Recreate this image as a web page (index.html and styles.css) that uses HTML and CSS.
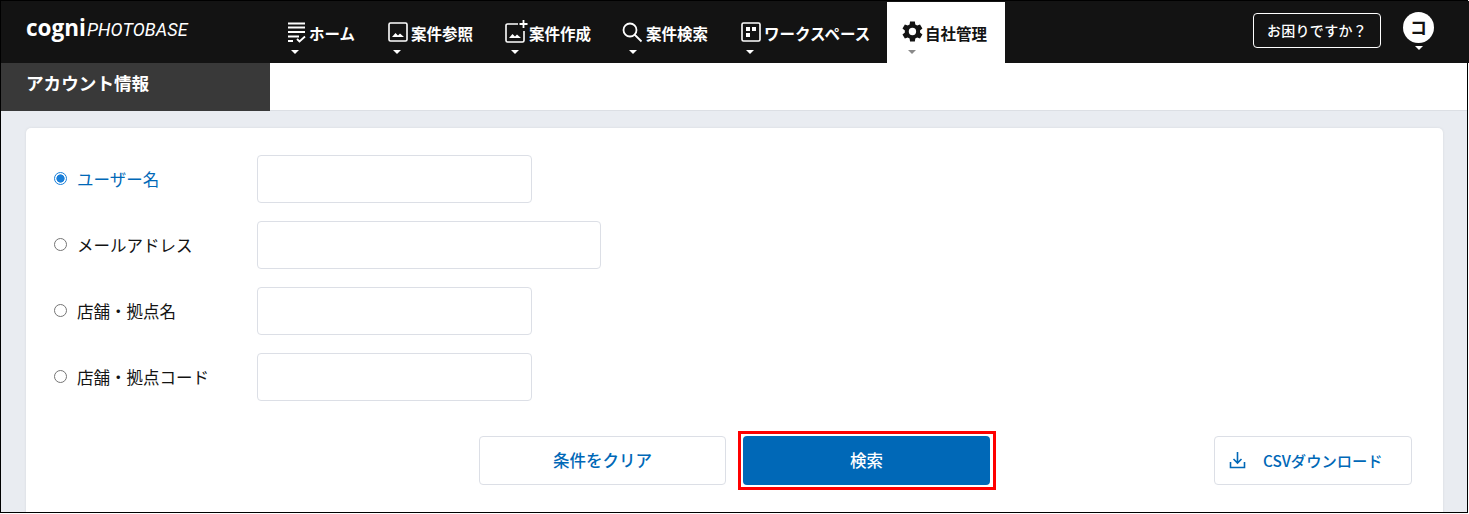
FILE: index.html
```html
<!DOCTYPE html>
<html lang="ja">
<head>
<meta charset="utf-8">
<title>アカウント情報</title>
<link rel="stylesheet" href="styles.css">
</head>
<body>
<div class="frame">
  <header class="header">
    <div class="logo"><span class="logo-cogni">cogni</span><span class="logo-photo">PHOTOBASE</span></div>
    <nav class="nav">
      <a class="nav-item w-home"><span class="nav-icon"><svg width="20" height="22" viewBox="0 0 20 22" fill="none" stroke="#fff" stroke-width="1.8"><path d="M1 2.500h17M1 6.500h17M1 11h17M1 15.500h11M1 20h5M10 18l2.500 2.500L18 15.500"/></svg><i class="caret"></i></span><span>ホーム</span></a>
      <a class="nav-item w-ref"><span class="nav-icon"><svg width="20" height="22" viewBox="0 0 20 22" fill="none"><rect x="1" y="2" width="18" height="18" rx="1.500" stroke="#fff" stroke-width="1.600"/><path d="M4 16l3.500-4 2.500 2.500 2-2 4 3.500z" fill="#fff"/></svg><i class="caret"></i></span><span>案件参照</span></a>
      <a class="nav-item w-new"><span class="nav-icon icon-new"><svg width="23" height="24" viewBox="0 0 23 24" fill="none"><path d="M13 4H2.500A1.500 1.500 0 0 0 1 5.500v15A1.500 1.500 0 0 0 2.500 22h15a1.500 1.500 0 0 0 1.500-1.500V11" stroke="#fff" stroke-width="1.600"/><path d="M4 18l3.500-4 2.500 2.500 2-2 4 3.500z" fill="#fff"/><path d="M18.500 0v8M14.500 4h8" stroke="#fff" stroke-width="1.800"/></svg><i class="caret"></i></span><span>案件作成</span></a>
      <a class="nav-item w-search"><span class="nav-icon"><svg width="21" height="22" viewBox="0 0 21 22" fill="none" stroke="#fff" stroke-width="1.800"><circle cx="8" cy="9" r="6.500"/><path d="M12.500 13.500L19.500 20.500"/></svg><i class="caret"></i></span><span>案件検索</span></a>
      <a class="nav-item w-work"><span class="nav-icon"><svg width="20" height="22" viewBox="0 0 20 22" fill="none"><rect x="1" y="2" width="18" height="18" rx="1.500" stroke="#fff" stroke-width="1.600"/><path d="M5 6h4v4H5zM11 6h4v4h-4zM5 12h4v4H5z" fill="#fff"/></svg><i class="caret"></i></span><span>ワークスペース</span></a>
      <a class="nav-item nav-active"><span class="nav-icon"><svg width="21" height="21" viewBox="2.500 2 19.500 20"><path fill="#131313" d="M19.400 13a7.600 7.600 0 0 0 0-2l2.300-1.800-2.300-3.900-2.700 1.100a7.500 7.500 0 0 0-1.800-1L14.500 2.500h-4.600l-.4 2.900a7.500 7.500 0 0 0-1.800 1L5 5.300 2.700 9.200 5 11a7.600 7.600 0 0 0 0 2l-2.300 1.800L5 18.700l2.700-1.100a7.500 7.500 0 0 0 1.800 1l.4 2.900h4.600l.4-2.900a7.500 7.500 0 0 0 1.800-1l2.700 1.100 2.300-3.900zM12.200 15.500a3.500 3.500 0 1 1 0-7 3.500 3.500 0 0 1 0 7z"/></svg><i class="caret caret-grey"></i></span><span>自社管理</span></a>
    </nav>
    <div class="header-right">
      <a class="help">お困りですか？</a>
      <div class="avatar-wrap"><div class="avatar">コ</div><i class="caret"></i></div>
    </div>
  </header>
  <div class="subbar"><div class="subtitle">アカウント情報</div></div>
  <main class="content">
    <section class="card">
      <div class="rows">
        <label class="row row-on"><span class="radio radio-on"></span><span class="row-label">ユーザー名</span><span class="field"></span></label>
        <label class="row"><span class="radio"></span><span class="row-label">メールアドレス</span><span class="field field-wide"></span></label>
        <label class="row"><span class="radio"></span><span class="row-label">店舗・拠点名</span><span class="field"></span></label>
        <label class="row"><span class="radio"></span><span class="row-label">店舗・拠点コード</span><span class="field"></span></label>
      </div>
      <div class="actions">
        <button class="btn btn-clear">条件をクリア</button>
        <div class="highlight"><button class="btn btn-primary">検索</button></div>
        <button class="btn btn-csv"><svg width="17" height="18" viewBox="0 0 17 18" fill="none" stroke="#0068b7" stroke-width="1.600"><path d="M8.500 1v10.500M4.500 8l4 4 4-4"/><path d="M1.500 11v5.500h14V11"/></svg><span>CSVダウンロード</span></button>
      </div>
    </section>
  </main>
</div>
</body>
</html>
```

FILE: styles.css
```css
* { box-sizing: border-box; }
html, body { margin: 0; padding: 0; }
body {
  width: 1469px;
  height: 514px;
  overflow: hidden;
  background: #fff;
  font-family: "Noto Sans CJK JP", "Noto Sans", sans-serif;
  color: #131313;
}
.frame {
  width: 1468px;
  height: 513px;
  border: 1px solid #000;
  display: flex;
  flex-direction: column;
}
.header {
  height: 62px;
  flex: none;
  margin-right: -2px;
  background: #131313;
  display: flex;
  color: #fff;
}
.logo {
  width: 286px;
  flex: none;
  padding: 12px 0 0 25px;
  display: flex;
  align-items: baseline;
  height: 40px;
  line-height: 30px;
}
.logo-cogni {
  font-family: "Open Sans", sans-serif;
  font-size: 22.500px;
  font-weight: 700;
  letter-spacing: 0;
}
.logo-photo {
  font-family: "Roboto", sans-serif;
  font-style: italic;
  font-size: 18px;
  margin-left: 1px;
  letter-spacing: 0.1px;
}
.nav { display: flex; flex: none; }
.nav-item {
  display: flex;
  padding-top: 20px;
  gap: 3px;
  font-size: 15.500px;
  font-weight: 700;
  line-height: 24px;
  color: #fff;
}
.w-home { width: 101px; gap: 2px; }
.w-ref { width: 117px; }
.w-new { width: 117px; gap: 1px; }
.w-search { width: 119px; }
.w-work { width: 146px; }
.nav-active {
  width: 118px;
  background: #fff;
  color: #131313;
  padding-left: 15px;
  margin-top: 1px;
  padding-top: 19px;
  gap: 2px;
}
.nav-icon {
  position: relative;
  display: block;
  height: 24px;
}
.nav-icon svg { display: block; }
.icon-new { margin-top: -1px; margin-bottom: 1px; }
.caret {
  display: block;
  width: 0;
  height: 0;
  border-left: 4px solid transparent;
  border-right: 4px solid transparent;
  border-top: 4px solid #fff;
}
.nav-icon .caret {
  position: absolute;
  left: 4px;
  top: 29px;
}
.w-ref .nav-icon .caret { left: 5px; }
.w-new .nav-icon .caret { left: 6px; top: 30px; }
.w-search .nav-icon .caret { left: 7px; }
.w-work .nav-icon .caret { left: 5px; }
.nav-active .nav-icon .caret { left: 6px; }
.caret-grey { border-top-color: #8a8a8a; }
.header-right {
  margin-left: auto;
  display: flex;
  padding-right: 35px;
  gap: 22px;
}
.help {
  margin-top: 12px;
  width: 128px;
  height: 35px;
  border: 1px solid #fff;
  border-radius: 4px;
  font-size: 14px;
  font-weight: 500;
  line-height: 33px;
  text-align: center;
  letter-spacing: 0.3px;
  color: #fff;
}
.avatar-wrap {
  margin-top: 11px;
  display: flex;
  flex-direction: column;
  align-items: center;
}
.avatar {
  width: 31px;
  height: 31px;
  border-radius: 50%;
  background: #fff;
  color: #131313;
  font-size: 17px;
  font-weight: 700;
  line-height: 30px;
  text-align: center;
}
.avatar-wrap .caret { margin-top: 3px; }
.subbar {
  height: 48px;
  flex: none;
  background: #fff;
  box-shadow: inset 0 -1px 0 #dcdfe4;
}
.subtitle {
  width: 269px;
  height: 48px;
  background: #393939;
  color: #fff;
  font-size: 17.600px;
  font-weight: 700;
  line-height: 40px;
  padding-left: 25px;
}
.content {
  flex: 1;
  background: #e9ecf1;
  padding: 17px 24px 0 25px;
  min-height: 0;
  overflow: hidden;
}
.card {
  background: #fff;
  border-radius: 5px 5px 0 0;
  height: 400px;
  box-shadow: 0 0 3px rgba(0, 0, 0, 0.08);
  padding: 27px 31px 0 28px;
}
.rows {
  display: flex;
  flex-direction: column;
  gap: 18px;
}
.row {
  display: flex;
  height: 48px;
  font-size: 16.500px;
  line-height: 24px;
  color: #131313;
}
.row-on { color: #0068b7; }
.radio {
  flex: none;
  width: 13px;
  height: 13px;
  margin-top: 17px;
  border: 1px solid #757575;
  border-radius: 50%;
  background: #fff;
}
.radio-on {
  border: 1.500px solid #1a7fd9;
  background: radial-gradient(circle, #1a7fd9 0 3.800px, #fff 4.400px);
}
.row-label {
  width: 180px;
  flex: none;
  margin-left: 10px;
  padding-top: 12px;
}
.field {
  width: 275px;
  height: 48px;
  border: 1px solid #dcdfe6;
  border-radius: 4px;
  background: #fff;
}
.field-wide { width: 344px; }
.actions {
  display: flex;
  align-items: center;
  margin-top: 30px;
  margin-left: 425px;
}
.btn {
  font-family: inherit;
  font-size: 16.500px;
  font-weight: 500;
  height: 49px;
  border-radius: 4px;
  padding: 0 0 2px;
  border: 1px solid #dcdfe6;
  background: #fff;
  color: #0068b7;
}
.btn-clear { width: 247px; }
.highlight {
  margin-left: 12px;
  border: 3px solid #f00;
  padding: 2px;
  width: 258px;
  height: 59px;
}
.btn-primary {
  display: block;
  width: 247px;
  height: 49px;
  background: #0068b7;
  border: 0;
  color: #fff;
}
.btn-csv {
  margin-left: 218px;
  width: 198px;
  display: flex;
  align-items: center;
  gap: 17px;
  padding-left: 14px;
  font-size: 15.300px;
  font-weight: 500;
}
```
